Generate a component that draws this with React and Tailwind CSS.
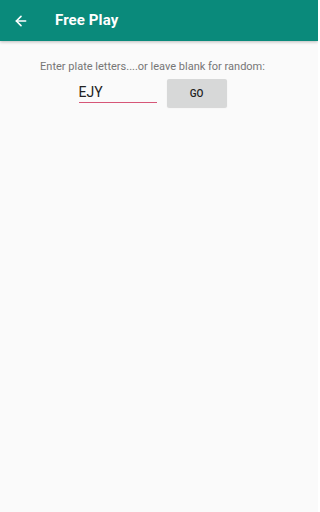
import React, { useState } from 'react';
import { ArrowLeft } from 'lucide-react';

const App = () => {
  const [letters, setLetters] = useState('EJY');

  return (
    <div className="w-[318px] h-[512px] bg-[#fafafa] overflow-hidden" style={{ fontFamily: 'Roboto, "Noto Sans", sans-serif' }}>
      {/* Toolbar */}
      <div className="h-[41px] bg-[#0a8a7b] flex items-center shadow-[0_1px_3px_rgba(0,0,0,0.25)]">
        <ArrowLeft size={16} strokeWidth={2.4} className="text-white ml-[13px]" />
        <h1 className="ml-[26px] text-white text-[15px] font-bold tracking-[0.1px]">Free Play</h1>
      </div>

      {/* Content */}
      <div className="flex flex-col items-center pr-[13px] pt-[19px]">
        <p className="text-[11px] text-[#767676] leading-[14px]">
          Enter plate letters....or leave blank for random:
        </p>
        <div className="flex items-center mt-[5px]">
          <div className="w-[78px] pb-[2px]">
            <input
              value={letters}
              onChange={(e) => setLetters(e.target.value)}
              className="w-full bg-transparent text-[14px] text-[#222] leading-[18px] outline-none border-b-[1.5px] border-[#d65677] pb-[1px]"
            />
          </div>
          <button className="ml-[10px] w-[60px] h-[28px] bg-[#d7d8d8] text-[10px] font-medium text-[#222] rounded-[2px] shadow-[0_1px_1px_rgba(0,0,0,0.15)]">
            GO
          </button>
        </div>
      </div>
    </div>
  );
};

export default App;
